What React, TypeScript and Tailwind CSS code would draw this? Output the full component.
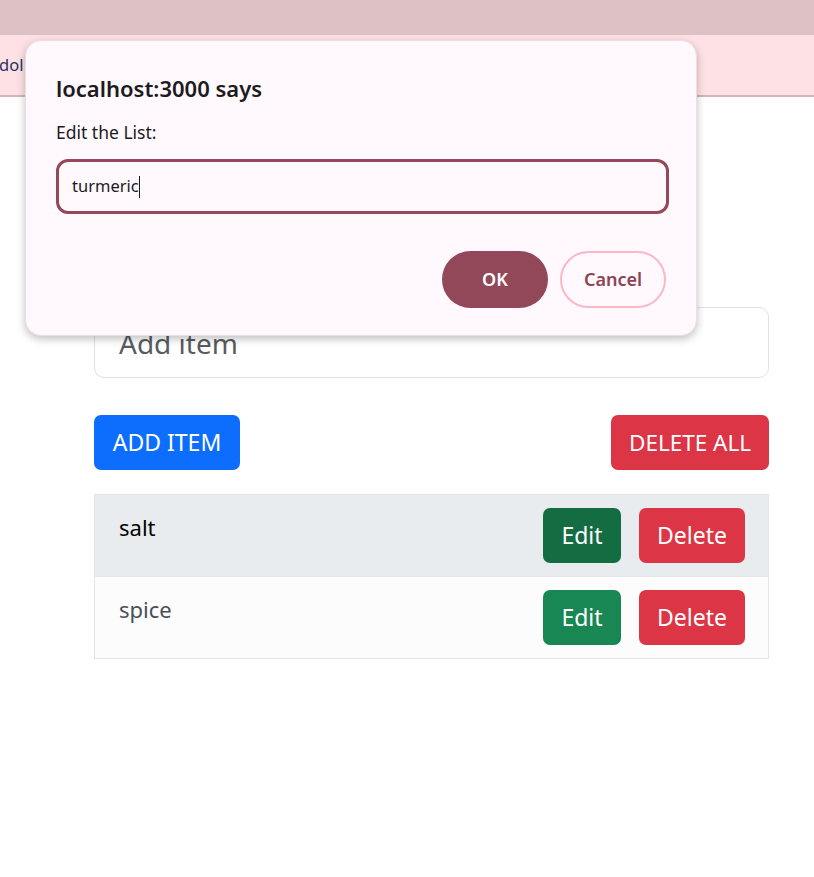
const font = { fontFamily: '"Segoe UI", "Noto Sans", "Open Sans", sans-serif' };

type Item = { name: string; active?: boolean };

const items: Item[] = [
  { name: 'salt', active: true },
  { name: 'spice' },
];

function PromptDialog() {
  return (
    <div className="absolute left-[25px] top-[40px] w-[672px] h-[296px] rounded-[16px] bg-[#fff8fc] border border-[#f0dde3] shadow-[0_3px_8px_rgba(0,0,0,0.25)] px-[30px] pt-[32px]">
      <h2 className="text-[22px] font-semibold leading-[30px] text-[#1d1b1e]">localhost:3000 says</h2>
      <p className="mt-[17px] text-[17.5px] leading-[24px] text-[#1d1b1e]">Edit the List:</p>
      <div className="mt-[15px] h-[55px] w-[613px] rounded-[12px] border-[3px] border-[#94485a] flex items-center px-[13px]">
        <span className="text-[16.5px] text-[#1d1b1e]">turmeric</span>
        <span className="w-px h-[22px] bg-[#1d1b1e]" />
      </div>
      <div className="mt-[37px] flex justify-end gap-[12px]">
        <button className="w-[106px] h-[57px] rounded-full bg-[#934859] text-white text-[18px] font-semibold">OK</button>
        <button className="w-[106px] h-[57px] rounded-full border-2 border-[#fab8c8] text-[#8c4455] text-[18px] font-semibold">Cancel</button>
      </div>
    </div>
  );
}

export default function App() {
  return (
    <div className="relative w-[814px] h-[877px] bg-white overflow-hidden" style={font}>
      <div className="h-[35px] bg-[#dcc1c5]" />
      <div className="h-[62px] bg-[#fee1e4] border-b-2 border-[#d4b4ba] flex items-center">
        <span className="-ml-[1px] text-[16.5px] text-[#24325e]">dol</span>
      </div>

      <main className="w-[675px] ml-[94px] pt-[210px]">
        <div className="h-[71px] rounded-[10px] border border-[#dee2e6] flex items-center px-[24px]">
          <span className="text-[28px] text-[#595c5f]">Add item</span>
        </div>

        <div className="mt-[37px] flex justify-between">
          <button className="w-[146px] h-[55px] rounded-[7px] bg-[#0d6efd] text-white text-[23px]">ADD ITEM</button>
          <button className="w-[158px] h-[55px] rounded-[7px] bg-[#dc3545] text-white text-[22.5px]">DELETE ALL</button>
        </div>

        <ul className="mt-[24px] border border-[#e5e5e5]">
          {items.map((it, i) => (
            <li
              key={it.name}
              className={`flex justify-between items-start pl-[24px] pr-[23px] py-[13px] ${i > 0 ? 'border-t border-[#e5e5e5]' : ''} ${it.active ? 'bg-[#e9ecef]' : 'bg-[#fcfcfc]'}`}
            >
              <span className={`text-[22px] leading-[38px] ${it.active ? 'text-black' : 'text-[#495057]'}`}>{it.name}</span>
              <div className="flex gap-[18px]">
                <button className={`w-[78px] h-[55px] rounded-[7px] text-white text-[23px] ${it.active ? 'bg-[#146c43]' : 'bg-[#198754]'}`}>Edit</button>
                <button className="w-[106px] h-[55px] rounded-[7px] bg-[#dc3545] text-white text-[23px]">Delete</button>
              </div>
            </li>
          ))}
        </ul>
      </main>

      <PromptDialog />
    </div>
  );
}
